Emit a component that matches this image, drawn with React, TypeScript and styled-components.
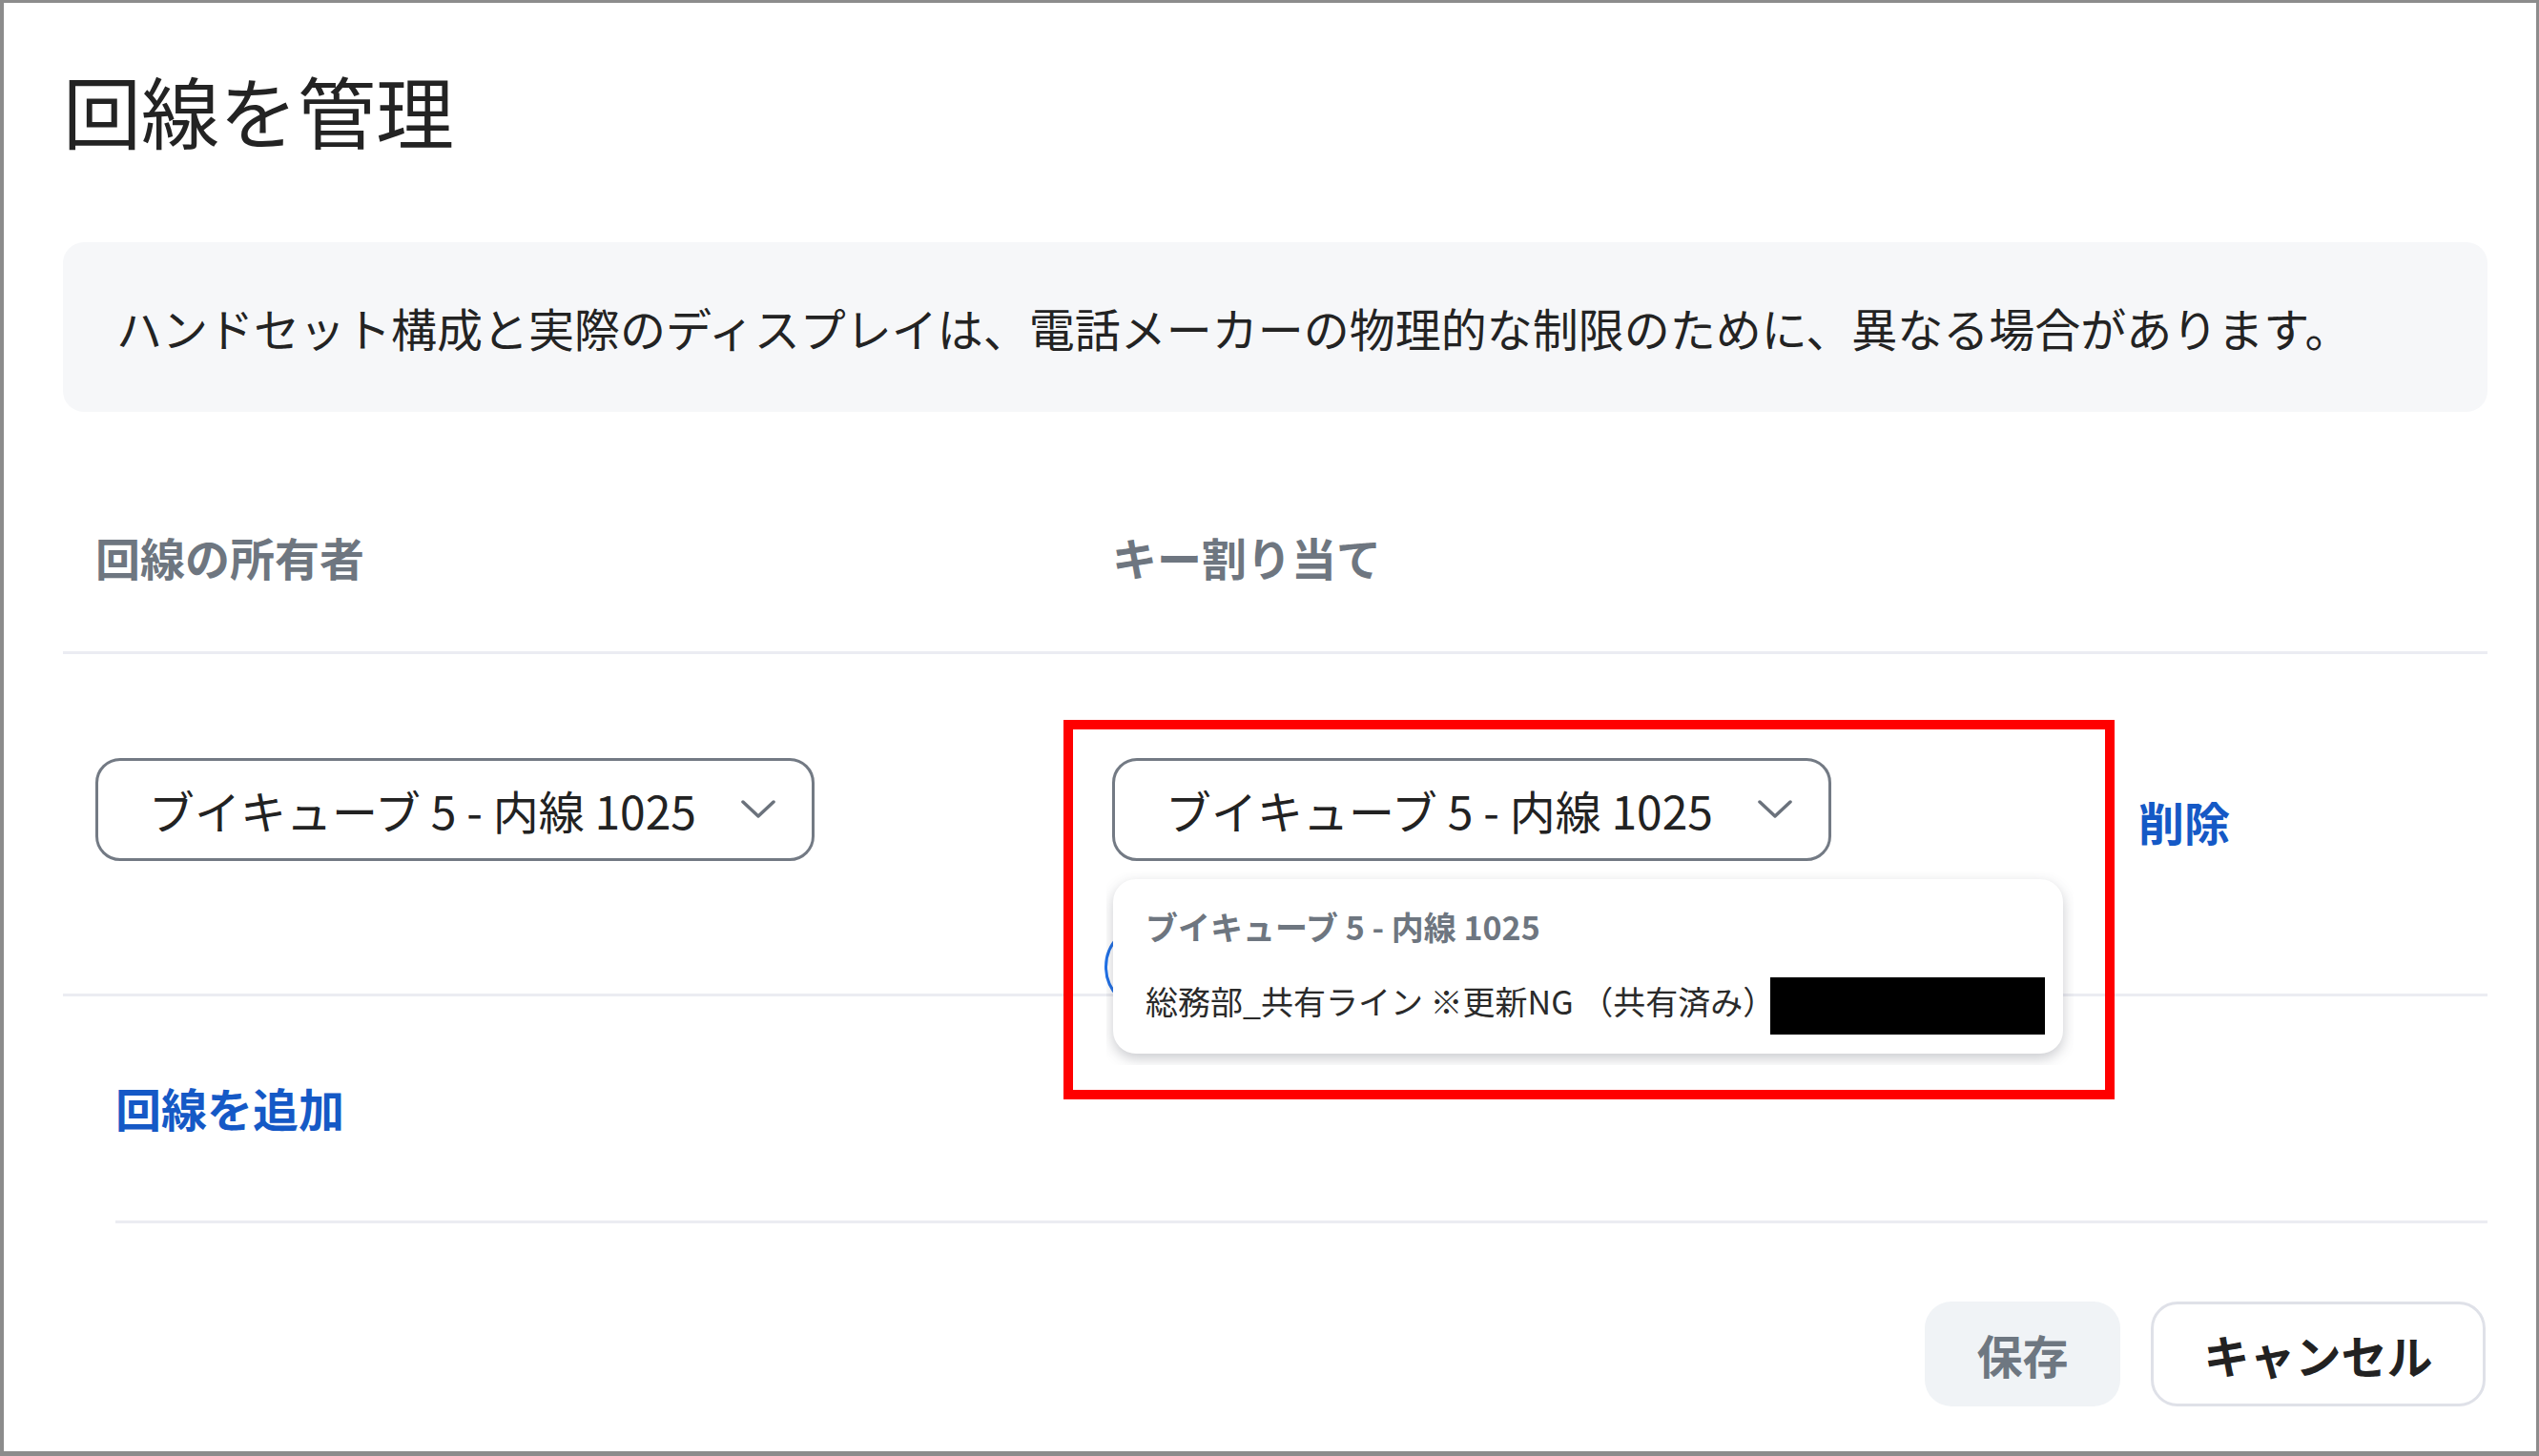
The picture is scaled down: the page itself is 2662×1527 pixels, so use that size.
import styled, { createGlobalStyle } from 'styled-components';

const GlobalStyle = createGlobalStyle`
  html, body {
    margin: 0;
    padding: 0;
    background: #fff;
  }
  body {
    font-family: "Noto Sans CJK JP", "Noto Sans", sans-serif;
  }
  * {
    box-sizing: border-box;
  }
`;

const BLUE = '#1559c6';
const LINE = '#ebecf2';

const Page = styled.div`
  width: 2662px;
  height: 1527px;
  border: 3px solid #8c8c8c;
  border-left-width: 4px;
  border-bottom-width: 5px;
  padding: 71px 51px 0 62px;
  background: #fff;
  overflow: hidden;
`;

const Title = styled.h1`
  margin: 0;
  font-size: 82px;
  line-height: 1;
  font-weight: 400;
  color: #232323;
`;

const Notice = styled.div`
  margin-top: 98px;
  height: 178px;
  display: flex;
  align-items: center;
  padding-left: 56px;
  border-radius: 22px;
  background: #f6f7f9;
  font-size: 48px;
  line-height: 1;
  color: #232323;
`;

const Grid = styled.div<{ $pad: string }>`
  display: grid;
  grid-template-columns: 1066px 1076px 1fr;
  padding: ${(p) => p.$pad};
  border-bottom: 3px solid ${LINE};
`;

const HeaderLabel = styled.div`
  font-size: 47px;
  line-height: 1;
  font-weight: 700;
  color: #6e7680;
`;

const Cell = styled.div`
  position: relative;
`;

const SelectBox = styled.div`
  width: 754px;
  height: 108px;
  border: 3px solid #737a84;
  border-radius: 26px;
  background: #fff;
  display: flex;
  align-items: center;
  justify-content: space-between;
  padding: 0 38px 0 53px;
  font-size: 48px;
  line-height: 1;
  color: #222;
`;

const Chevron = () => (
  <svg width="36" height="20" viewBox="0 0 36 20" fill="none">
    <polyline
      points="2,2 18,17 34,2"
      stroke="#6b727c"
      strokeWidth="3.5"
      strokeLinecap="round"
      strokeLinejoin="round"
    />
  </svg>
);

const FocusRing = styled.div`
  position: absolute;
  left: -8px;
  top: 173px;
  width: 300px;
  height: 92px;
  border: 3px solid #1f6fe5;
  border-radius: 46px;
  z-index: 1;
`;

const MenuClip = styled.div`
  position: absolute;
  left: -6px;
  top: 112px;
  width: 1014px;
  height: 210px;
  overflow: hidden;
  padding: 15px 11px 0 7px;
  z-index: 2;
`;

const MenuCard = styled.div`
  width: 996px;
  height: 183px;
  border-radius: 24px;
  background: #fff;
  box-shadow: 0 5px 14px rgba(60, 64, 80, 0.28);
  padding: 33px 0 0 34px;
`;

const MenuHeader = styled.div`
  font-size: 34px;
  line-height: 1;
  font-weight: 700;
  color: #6e7680;
`;

const MenuItem = styled.div`
  margin-top: 26px;
  display: flex;
  align-items: center;
  font-size: 34px;
  line-height: 1;
  color: #2a2a2a;
`;

const Redacted = styled.span`
  display: block;
  width: 288px;
  height: 60px;
  margin: 10px 0 0 -5px;
  background: #000;
`;

const Annotation = styled.div`
  position: absolute;
  left: -51px;
  top: -40px;
  width: 1102px;
  height: 398px;
  border: 10px solid #ff0000;
  z-index: 3;
  pointer-events: none;
`;

const DeleteLink = styled.a`
  align-self: start;
  margin-top: 42px;
  font-size: 48px;
  line-height: 1;
  font-weight: 700;
  color: ${BLUE};
  cursor: pointer;
`;

const AddSection = styled.div`
  margin-left: 55px;
  padding: 92px 0 95px;
  border-bottom: 3px solid ${LINE};
`;

const AddLink = styled.a`
  display: block;
  font-size: 48px;
  line-height: 1;
  font-weight: 700;
  color: ${BLUE};
  cursor: pointer;
`;

const Footer = styled.div`
  margin-top: 82px;
  padding-right: 2px;
  display: flex;
  justify-content: flex-end;
  gap: 32px;
`;

const Button = styled.button<{ $variant: 'disabled' | 'outline' }>`
  height: 110px;
  border-radius: 28px;
  font-family: inherit;
  font-size: 48px;
  line-height: 1;
  font-weight: 700;
  padding: 0;
  width: ${(p) => (p.$variant === 'disabled' ? '205px' : '351px')};
  background: ${(p) => (p.$variant === 'disabled' ? '#f0f3f6' : '#fff')};
  color: ${(p) => (p.$variant === 'disabled' ? '#6e7781' : '#222')};
  border: ${(p) => (p.$variant === 'disabled' ? 'none' : '3px solid #dfe1e8')};
`;

const LINE_NAME = 'ブイキューブ 5 - 内線 1025';

export default function App() {
  return (
    <>
      <GlobalStyle />
      <Page>
        <Title>回線を管理</Title>
        <Notice>
          ハンドセット構成と実際のディスプレイは、電話メーカーの物理的な制限のために、異なる場合があります。
        </Notice>

        <Grid $pad="128px 0 76px 34px">
          <HeaderLabel>回線の所有者</HeaderLabel>
          <HeaderLabel>キー割り当て</HeaderLabel>
        </Grid>

        <Grid $pad="109px 0 139px 34px">
          <Cell>
            <SelectBox>
              <span>{LINE_NAME}</span>
              <Chevron />
            </SelectBox>
          </Cell>
          <Cell>
            <SelectBox>
              <span>{LINE_NAME}</span>
              <Chevron />
            </SelectBox>
            <FocusRing />
            <MenuClip>
              <MenuCard>
                <MenuHeader>{LINE_NAME}</MenuHeader>
                <MenuItem>
                  <span>総務部_共有ライン ※更新NG （共有済み）</span>
                  <Redacted />
                </MenuItem>
              </MenuCard>
            </MenuClip>
            <Annotation />
          </Cell>
          <DeleteLink>削除</DeleteLink>
        </Grid>

        <AddSection>
          <AddLink>回線を追加</AddLink>
        </AddSection>

        <Footer>
          <Button $variant="disabled">保存</Button>
          <Button $variant="outline">キャンセル</Button>
        </Footer>
      </Page>
    </>
  );
}
